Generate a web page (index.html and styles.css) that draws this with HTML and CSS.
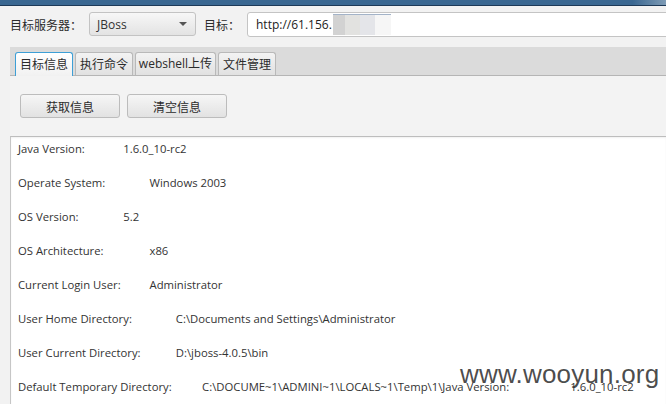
FILE: index.html
```html
<!DOCTYPE html>
<html>
<head>
<meta charset="utf-8">
<link rel="stylesheet" href="styles.css">
</head>
<body>
<div class="titlebar"></div>
<div class="toolbar">
  <span class="lbl lbl-server">目标服务器：</span>
  <div class="combo"><span>JBoss</span><span class="arrow"></span></div>
  <span class="lbl lbl-target">目标：</span>
  <div class="field"><span class="url">http://61.156.</span><span class="mosaic"></span></div>
</div>
<div class="tabpane">
  <div class="tabs">
    <div class="tab active">目标信息</div>
    <div class="tab">执行命令</div>
    <div class="tab tab-wide">webshell上传</div>
    <div class="tab">文件管理</div>
  </div>
  <div class="content">
    <div class="buttons">
      <button class="btn">获取信息</button>
      <button class="btn">清空信息</button>
    </div>
    <div class="output"><pre class="text">Java Version:		1.6.0_10-rc2

Operate System:		Windows 2003

OS Version:		5.2

OS Architecture:		x86

Current Login User:		Administrator

User Home Directory:		C:\Documents and Settings\Administrator

User Current Directory:		D:\jboss-4.0.5\bin

Default Temporary Directory:		C:\DOCUME~1\ADMINI~1\LOCALS~1\Temp\1\Java Version:			1.6.0_10-rc2</pre>
      <div class="watermark">www.wooyun.org</div>
    </div>
  </div>
</div>
</body>
</html>
```
FILE: styles.css
```css
html, body {
  margin: 0;
  padding: 0;
  height: 100%;
  overflow: hidden;
}
body {
  background: #f2f2f2;
  font-family: "Segoe UI", "Open Sans", "Noto Sans CJK SC", sans-serif;
  font-size: 12px;
  color: #333;
}
.titlebar {
  height: 5px;
  background: linear-gradient(to right, #3a6791 0%, #3a6791 95%, #7f9cb6 100%);
  border-bottom: 1px solid #1d3957;
}
.toolbar {
  display: flex;
  align-items: center;
  padding: 6px 0 0 10px;
  height: 24px;
}
.lbl {
  font-family: "Noto Sans CJK SC", sans-serif;
  font-size: 12px;
  color: #2b2b2b;
}
.lbl-server { width: 79px; }
.lbl-target { margin-left: 8px; width: 43px; }
.combo {
  box-sizing: border-box;
  width: 107px;
  height: 24px;
  border: 1px solid #c3c3c3;
  border-radius: 3px;
  background: linear-gradient(#f7f7f7, #e3e3e3);
  display: flex;
  align-items: center;
  justify-content: space-between;
  padding: 0 8px 0 7px;
  color: #333;
}
.arrow {
  width: 0;
  height: 0;
  border-left: 4px solid transparent;
  border-right: 4px solid transparent;
  border-top: 4px solid #555;
}
.field {
  box-sizing: border-box;
  flex: 1;
  height: 25px;
  margin-right: -10px;
  border: 1px solid #c4c4c4;
  border-radius: 3px;
  background: #fff;
  display: flex;
  align-items: center;
  padding-left: 8px;
  color: #222;
}
.mosaic {
  width: 58px;
  height: 20px;
  margin-left: 1px;
  background: linear-gradient(to right, #d2d2d2 0, #d2d2d2 12px, #e2e2e0 12px, #e2e2e0 27px, #e4e5e9 27px, #e4e5e9 42px, #f6f6f6 42px);
  border-top: 1px solid #a3b3c8;
  filter: blur(0.6px);
}
.tabpane {
  margin: 11px 0 0 10px;
}
.tabs {
  height: 28px;
  background: #dbdbdb;
  border-bottom: 1px solid #b5b5b5;
  display: flex;
  align-items: flex-end;
  padding-left: 5px;
  gap: 2px;
}
.tab {
  box-sizing: border-box;
  height: 23px;
  width: 58px;
  border: 1px solid #b9b9b9;
  border-bottom: none;
  border-radius: 3px 3px 0 0;
  background: linear-gradient(#f3f3f3, #e1e1e1);
  font-family: "Noto Sans CJK SC", sans-serif;
  font-size: 12px;
  line-height: 21px;
  text-align: center;
  color: #2b2b2b;
}
.tab-wide {
  width: 81px;
  font-family: "Segoe UI", "Open Sans", "Noto Sans CJK SC", sans-serif;
}
.tab.active {
  border: 1px solid #3d9fd6;
  border-bottom: none;
  background: linear-gradient(#ffffff, #f1f1f1);
  height: 24px;
  margin-bottom: -1px;
}
.content {
  background: #f3f3f3;
}
.buttons {
  display: flex;
  gap: 7px;
  padding: 18px 0 18px 10px;
}
.btn {
  box-sizing: border-box;
  width: 100px;
  height: 24px;
  margin: 0;
  border: 1px solid #bcbcbc;
  border-radius: 3px;
  background: linear-gradient(#f6f6f6, #e2e2e2);
  font-family: "Noto Sans CJK SC", sans-serif;
  font-size: 12px;
  color: #2b2b2b;
  padding: 0;
}
.output {
  position: relative;
  background: #fff;
  border-top: 1px solid #bdbdbd;
  border-left: 1px solid #c6c6c6;
  height: 300px;
  box-shadow: inset 0 1px 2px rgba(0,0,0,0.06);
}
.text {
  margin: 0;
  padding: 2.5px 0 0 7px;
  font-family: "Open Sans", sans-serif;
  font-size: 11.3px;
  line-height: 17.07px;
  tab-size: 26.3px;
  color: #333;
  white-space: pre;
}
.watermark {
  position: absolute;
  left: 449px;
  top: 222px;
  font-family: "Liberation Sans", sans-serif;
  font-size: 26px;
  color: rgba(45, 45, 45, 0.85);
  letter-spacing: 0.2px;
}
```
